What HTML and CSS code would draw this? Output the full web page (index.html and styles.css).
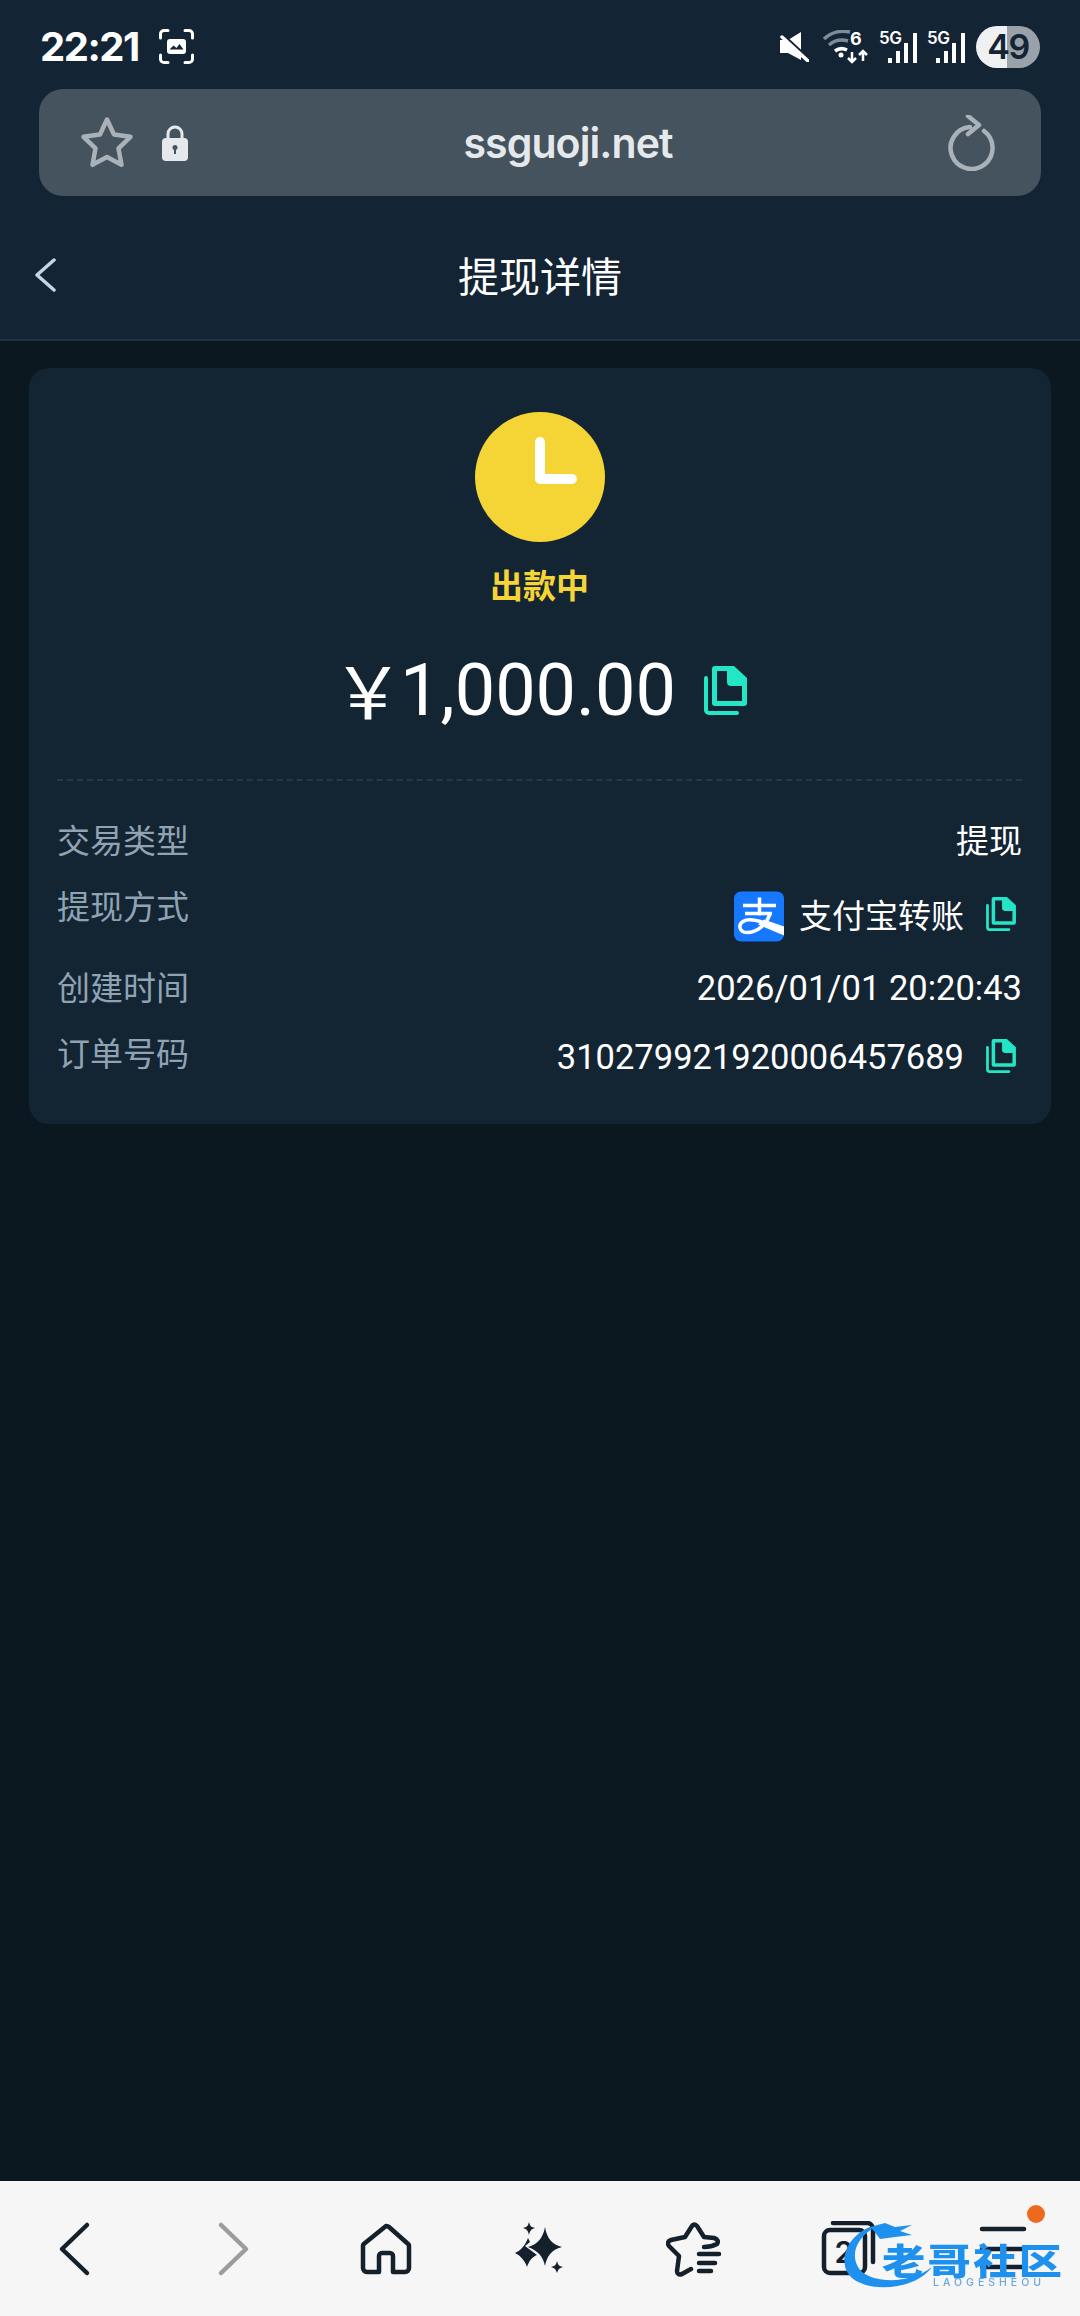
FILE: index.html
```html
<!DOCTYPE html>
<html lang="zh-CN">
<head>
<meta charset="utf-8">
<title>提现详情</title>
<link rel="stylesheet" href="styles.css">
</head>
<body>
<svg class="defs" width="0" height="0" aria-hidden="true">
  <symbol id="copy" viewBox="0 0 43 49">
    <path class="copy-back" d="M2 12V44a3 3 0 0 0 3 3H33"/>
    <path class="copy-front" fill-rule="evenodd" d="M11 0H30L43 12V37a3 3 0 0 1-3 3H11a3 3 0 0 1-3-3V3a3 3 0 0 1 3-3ZM13 5V35H38V20H27a4 4 0 0 1-4-4V5Z"/>
  </symbol>
</svg>
<div class="page">
  <header class="top">
    <div class="status">
      <div class="status-left">
        <span class="time">22:21</span>
        <svg class="shot" viewBox="0 0 35 35"><path class="shot-frame" d="M1.500 9V5a3.500 3.500 0 0 1 3.500-3.500H9M26 1.500h4a3.500 3.500 0 0 1 3.500 3.500v4M33.500 26v4a3.500 3.500 0 0 1-3.500 3.500h-4M9 33.500H5A3.500 3.500 0 0 1 1.500 30v-4"/><rect class="shot-fill" x="8" y="10" width="19" height="15" rx="3"/><path class="shot-hill" d="M10.500 20.500l4-4 3 2.500 3-4 4 5.500z"/></svg>
      </div>
      <div class="status-right">
        <svg class="mute" viewBox="0 0 30 30"><path class="solid" d="M1 8H9L22 0V28L9 21H1Z"/><path class="mute-gap" d="M3 2l28 26"/><path class="mute-cut" d="M3 5l26 24"/></svg>
        <div class="wifi">
          <svg class="wifi-svg" viewBox="0 0 46 34"><path class="wifi-dim" d="M1 9C8 2 18 0 27 2M6 15C12 10 18 9 25 11"/><path class="wifi-on" d="M12 21C16 18 20 18 24 20"/><circle class="solid" cx="18" cy="25" r="2.500"/><path class="wifi-on thin" d="M29 22V32m-4-4l4 4 4-4M40 31V21m-4 4l4-4 4 4"/></svg>
          <span class="wifi-num">6</span>
        </div>
        <div class="sig"><span class="sig-label">5G</span><svg class="sig-svg" viewBox="0 0 39 33"><rect class="solid" x="10" y="28" width="4" height="5"/><rect class="solid" x="18" y="21" width="4" height="12"/><rect class="solid" x="26" y="13" width="4" height="20"/><rect class="solid" x="35" y="3" width="4" height="30"/></svg></div>
        <div class="sig"><span class="sig-label">5G</span><svg class="sig-svg" viewBox="0 0 39 33"><rect class="solid" x="10" y="28" width="4" height="5"/><rect class="solid" x="18" y="21" width="4" height="12"/><rect class="solid" x="26" y="13" width="4" height="20"/><rect class="solid" x="35" y="3" width="4" height="30"/></svg></div>
        <span class="battery">49</span>
      </div>
    </div>
    <div class="urlbar">
      <div class="url-left">
        <svg class="url-star" viewBox="0 0 54 54"><path d="M27 3.500l7 15 16.500 2.300-12 11.500 3 16.500L27 41l-14.500 7.800 3-16.500-12-11.500L20 18.500z"/></svg>
        <svg class="lock" viewBox="0 0 26 36"><path class="lock-arc" d="M6 15V9a7 7 0 0 1 14 0v6"/><rect class="lock-body" x="0" y="13" width="26" height="23" rx="4"/><circle class="lock-hole" cx="13" cy="22.500" r="2.500"/><rect class="lock-hole" x="12" y="23" width="2" height="6"/></svg>
      </div>
      <span class="url-text">ssguoji.net</span>
      <svg class="reload" viewBox="0 0 48 56"><path d="M36 16A21 21 0 1 1 22 12"/><path d="M20 1L31 10 20 19"/></svg>
    </div>
    <div class="titlebar">
      <div class="title-side"><svg class="back" viewBox="0 0 22 34"><path d="M20 2L3 17l17 15"/></svg></div>
      <h1 class="title">提现详情</h1>
      <div class="title-side"></div>
    </div>
  </header>

  <main class="main">
    <section class="card">
      <div class="state">
        <div class="clock"><svg class="clock-svg" viewBox="0 0 130 130"><path d="M65 30V67H97"/></svg></div>
        <div class="state-text">出款中</div>
        <div class="amount">
          <span class="yen">￥</span><span class="amount-num">1,000.00</span>
          <svg class="copy copy-lg"><use href="#copy"/></svg>
        </div>
      </div>
      <div class="rows">
        <div class="row"><span class="label">交易类型</span><span class="value value-cn">提现</span></div>
        <div class="row row-pay">
          <span class="label">提现方式</span>
          <span class="value value-pay">
            <svg class="alipay" viewBox="0 0 50 50"><rect class="ali-bg" width="50" height="50" rx="7"/><path class="ali-line" d="M9 14H42M25.500 6V24M11 22H38"/><path class="ali-loop" d="M36 22C33 33 23 41 13 41 5 41 4 33 9 30 15 26 27 29 44 37"/><path class="solid" d="M30 28L50 35V44L24 33z"/></svg>
            <span>支付宝转账</span>
            <svg class="copy copy-sm"><use href="#copy"/></svg>
          </span>
        </div>
        <div class="row"><span class="label">创建时间</span><span class="value">2026/01/01 20:20:43</span></div>
        <div class="row row-order"><span class="label">订单号码</span><span class="value">310279921920006457689<svg class="copy copy-sm"><use href="#copy"/></svg></span></div>
      </div>
    </section>
  </main>

  <nav class="bottom">
    <div class="cell"><svg class="nav" viewBox="0 0 56 56"><path d="M38 4L13 28l25 24"/></svg></div>
    <div class="cell"><svg class="nav nav-off" viewBox="0 0 56 56"><path d="M18 4l25 24-25 24"/></svg></div>
    <div class="cell"><svg class="nav" viewBox="0 0 56 56"><path d="M28 5L7 22a4 4 0 0 0-2 4V47a4 4 0 0 0 4 4H21V35a3 3 0 0 1 3-3h8a3 3 0 0 1 3 3V51H47a4 4 0 0 0 4-4V26a4 4 0 0 0-2-4L31 6a4 4 0 0 0-3-1z"/></svg></div>
    <div class="cell"><svg class="nav nav-fill" viewBox="0 0 56 56"><path d="M33 6C35 17 39 23 50 26 39 29 35 35 33 45 31 35 26 30 16 26 26 23 31 17 33 6Z"/><path d="M17 1C18 5 19 6 23 7 19 8 18 10 17 14 16 10 15 8 11 7 15 6 16 5 17 1ZM45 40C46 44 47 45 51 46 47 47 46 49 45 52 44 49 43 47 39 46 43 45 44 44 45 40Z"/><path d="M16 17L18 21 13 25 25 34C20 36 17 40 15 46 13 40 9 35 3 32 8 30 13 25 16 17Z"/></svg></div>
    <div class="cell"><svg class="nav" viewBox="0 0 56 56"><path d="M38 26c6 0 11-2 13-3 2-3 0-5-3-6l-10-1-7-11c-2-2-4-2-5 0l-7 11-14 3c-3 1-4 3-2 6l10 10-2 15c0 3 2 4 5 3l9-5"/><path d="M33 33H53M33 42H49M33 50H45"/></svg></div>
    <div class="cell"><div class="tabs"><svg class="nav" viewBox="0 0 56 56"><path d="M12 2H46a6 6 0 0 1 6 6V41"/><rect x="3" y="9" width="41" height="43" rx="6"/></svg><span class="tabs-num">2</span></div></div>
    <div class="cell"><svg class="nav" viewBox="0 0 56 56"><path d="M7 8H49M7 28H49M7 46H49"/></svg></div>
    <span class="dot"></span>
    <div class="watermark">
      <svg class="wm-art" viewBox="0 0 230 80"><path d="M30 12C5 22-3 50 12 63c18 15 63 12 80-11-20 16-57 18-72 3C10 42 15 25 32 14z"/><path d="M30 12l15-4 10 4 17-2-12 6 12 4-17 2-15 2-6-8z"/></svg>
      <span class="wm-cn">老哥社区</span>
      <span class="wm-en">LAOGESHEOU</span>
    </div>
  </nav>
</div>
</body>
</html>
```

FILE: styles.css
```css
* { box-sizing: border-box; }
html, body { margin: 0; padding: 0; }
body {
  background: #0c1820;
  font-family: Roboto, "Noto Sans CJK SC", sans-serif;
  color: #fff;
}
.defs { position: absolute; }
.page { width: 1080px; height: 2316px; display: flex; flex-direction: column; overflow: hidden; }
.solid { fill: currentColor; }

/* top */
.top { background: #132435; border-bottom: 2px solid #1b3245; height: 341px; flex: none; }
.status { height: 89px; padding: 4px 40px 0 40px; display: flex; justify-content: space-between; align-items: center; }
.status-left { display: flex; align-items: center; gap: 20px; }
.time { font: 700 40px/1 Inter, sans-serif; letter-spacing: -1.500px; }
.shot { width: 35px; height: 35px; }
.shot-frame { fill: none; stroke: #fff; stroke-width: 3; stroke-linecap: round; }
.shot-fill { fill: #fff; }
.shot-hill { fill: #132435; }
.status-right { display: flex; align-items: center; color: #fff; }
.mute { width: 30px; height: 30px; }
.mute-gap { fill: none; stroke: #132435; stroke-width: 3; }
.mute-cut { stroke: #fff; stroke-width: 3.500; stroke-linecap: round; }
.wifi { position: relative; width: 46px; height: 34px; margin-left: 14px; }
.wifi-svg { width: 46px; height: 34px; display: block; }
.wifi-dim { fill: none; stroke: #7f8b96; stroke-width: 3.500; }
.wifi-on { fill: none; stroke: #fff; stroke-width: 3.500; }
.wifi-on.thin { stroke-width: 2.500; }
.wifi-num { position: absolute; left: 27px; top: 0; font: 700 18px/1 Inter, sans-serif; }
.sig { position: relative; width: 39px; height: 33px; margin-left: 9px; }
.sig-svg { width: 39px; height: 33px; display: block; }
.sig-label { position: absolute; left: 1px; top: 0; font: 600 17px/1 Inter, sans-serif; letter-spacing: -.500px; }
.battery {
  width: 64px; height: 42px; margin-left: 11px; border-radius: 21px;
  background: linear-gradient(90deg, #eef0f2 0 31px, #9aa1a8 31px);
  color: #132435; font: 600 34px/42px Inter, sans-serif; letter-spacing: -1.500px; text-align: center;
}
.urlbar {
  width: 1002px; height: 107px; margin-left: 39px; padding: 0 45px 0 41px;
  background: #45535f; border-radius: 24px;
  display: grid; grid-template-columns: 1fr auto 1fr; align-items: center;
}
.url-left { display: flex; align-items: center; gap: 28px; }
.url-star { width: 54px; height: 54px; fill: none; stroke: #aab2b9; stroke-width: 4.500; stroke-linejoin: round; }
.lock { width: 26px; height: 36px; }
.lock-arc { fill: none; stroke: #e6e9ec; stroke-width: 3; }
.lock-body { fill: #e6e9ec; }
.lock-hole { fill: #45535f; }
.url-text { font: 600 41px/1 Inter, sans-serif; color: #e6e9ec; letter-spacing: -.900px; margin: 2px 0 0 60px; }
.reload { justify-self: end; width: 48px; height: 56px; fill: none; stroke: #aab2b9; stroke-width: 4.500; stroke-linecap: round; stroke-linejoin: round; }
.titlebar { height: 143px; padding: 39px 0 24px; display: grid; grid-template-columns: 1fr auto 1fr; align-items: center; }
.title-side { display: flex; align-items: center; padding-left: 34px; }
.back { width: 22px; height: 34px; fill: none; stroke: #c4d6e4; stroke-width: 3.500; stroke-linecap: round; stroke-linejoin: round; }
.title { margin: 0; font: 400 41px/1.2 "Noto Sans CJK SC", sans-serif; color: #fff; }

/* card */
.main { flex: 1; padding: 27px 29px 0 29px; }
.card { background: #132433; border-radius: 20px; padding: 44px 29px 44px 28px; }
.state { display: flex; flex-direction: column; align-items: center; height: 369px; border-bottom: 2px dashed #26384a; }
.clock { width: 130px; height: 130px; border-radius: 50%; background: #f5d535; }
.clock-svg { display: block; width: 130px; height: 130px; fill: none; stroke: #fff; stroke-width: 10; stroke-linecap: round; stroke-linejoin: round; }
.state-text { margin-top: 21px; font: 700 33px/1.3 "Noto Sans CJK SC", sans-serif; color: #f5d535; }
.amount { display: flex; align-items: center; margin-top: 43px; }
.yen { font: 400 72px/84px "Noto Sans CJK SC", sans-serif; margin: -6px -4px 0 0; }
.amount-num { font: 400 72px/84px Roboto, sans-serif; }
.copy { fill: #24e6c6; stroke: none; }
.copy-back { fill: none; stroke: #24e6c6; stroke-width: 4; stroke-linecap: round; }
.copy-front { fill: #24e6c6; }
.copy-lg { width: 43px; height: 49px; margin-left: 28px; }
.copy-sm { width: 30px; height: 34px; margin: -6px 0 0 22px; }
.rows { display: flex; flex-direction: column; gap: 20px; padding-top: 37px; }
.row { display: flex; justify-content: space-between; align-items: flex-start; min-height: 46px; }
.label { font-size: 33px; line-height: 43px; color: #8fa3b3; font-family: "Noto Sans CJK SC", sans-serif; }
.value { display: flex; align-items: center; font-size: 34.500px; line-height: 46px; color: #fff; font-family: Roboto, "Noto Sans CJK SC", sans-serif; }
.value-cn { font-size: 33px; line-height: 44px; padding-top: 2px; }
.value-pay { font-size: 33px; margin: 7px 6px 3px 0; }
.row-order .value { margin: 3px 6px 0 0; }
.row-order .copy-sm { margin-top: -3px; }
.alipay { width: 50px; height: 51px; margin-right: 15px; color: #fff; }
.ali-bg { fill: #1677ff; }
.ali-line { fill: none; stroke: #fff; stroke-width: 3.500; }
.ali-loop { fill: none; stroke: #fff; stroke-width: 3.500; }

/* bottom */
.bottom { position: relative; flex: none; height: 135px; background: #f6f6f6; display: grid; grid-template-columns: repeat(7, 1fr); padding-top: 40px; }
.cell { display: flex; justify-content: center; align-items: flex-start; }
.nav { width: 56px; height: 56px; display: block; fill: none; stroke: #14202b; stroke-width: 4.500; stroke-linecap: round; stroke-linejoin: round; }
.nav-off { stroke: #9c9c9c; }
.nav-fill { fill: #14202b; stroke: none; }
.tabs { position: relative; width: 56px; height: 56px; }
.tabs-num { position: absolute; left: 14px; top: 13px; font: 600 30px/1.2 Inter, sans-serif; color: #14202b; }
.dot { position: absolute; left: 1027px; top: 24px; width: 18px; height: 18px; border-radius: 50%; background: #ec6a1f; }
.watermark { position: absolute; left: 840px; top: 34px; width: 230px; height: 80px; color: #1e90ee; filter: blur(.7px); }
.wm-art { position: absolute; left: 0; top: 0; width: 230px; height: 80px; fill: #1e90ee; }
.wm-cn { position: absolute; left: 42px; top: 28px; font: 900 36px/32px "Noto Sans CJK SC", sans-serif; letter-spacing: 2px; white-space: nowrap; transform: scaleX(1.2); transform-origin: left center; }
.wm-en { position: absolute; left: 93px; top: 63px; font: 500 10.500px/1 Inter, sans-serif; letter-spacing: 4px; color: #6aa6dc; white-space: nowrap; }
```
